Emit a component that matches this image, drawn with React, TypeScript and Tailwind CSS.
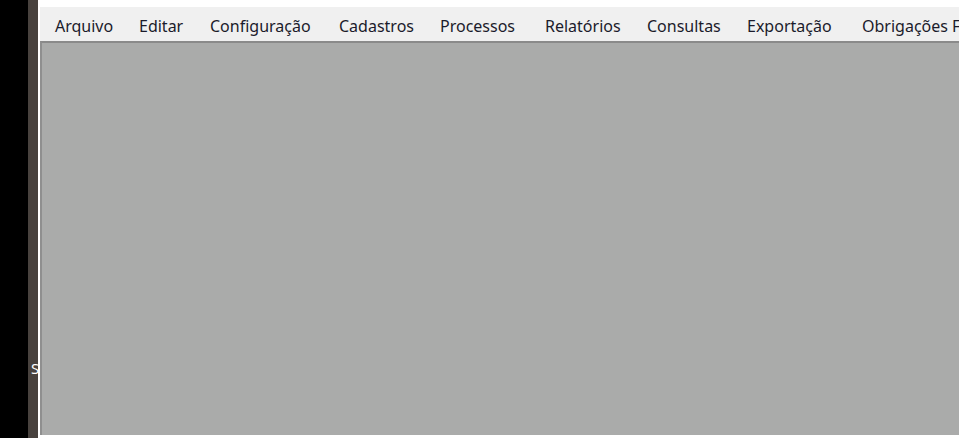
import React from "react";

const menus = [
  { label: "Arquivo", w: "w-[84px]" },
  { label: "Editar", w: "w-[71px]" },
  { label: "Configuração", w: "w-[129px]" },
  { label: "Cadastros", w: "w-[101px]" },
  { label: "Processos", w: "w-[105px]" },
  { label: "Relatórios", w: "w-[102px]" },
  { label: "Consultas", w: "w-[100px]" },
  { label: "Exportação", w: "w-[115px]" },
  { label: "Obrigações Fiscais", w: "w-[140px]" },
];

export default function App() {
  return (
    <div className="flex h-[438px] w-full overflow-hidden bg-black font-['Noto_Sans',sans-serif]">
      {/* desktop edge */}
      <div className="w-[28px] shrink-0 bg-black" />
      <div className="flex w-[10px] shrink-0 flex-col justify-end overflow-hidden bg-[#48423e] pb-[62px]">
        <span className="ml-[3px] text-[15px] leading-none text-white">S</span>
      </div>

      {/* app window */}
      <div className="flex min-w-0 flex-1 flex-col bg-white pl-[2px] pr-[3px]">
        <div className="h-[7px] shrink-0 bg-white" />
        <nav className="flex h-[34px] shrink-0 items-center overflow-hidden whitespace-nowrap bg-[#f0f0f0] pl-[15px] pt-[4px] text-[16px] text-[#1b1b2b]">
          {menus.map((m) => (
            <span key={m.label} className={`${m.w} shrink-0 leading-none`}>
              {m.label}
            </span>
          ))}
        </nav>
        <div className="flex min-h-0 flex-1 pb-[3px]">
          <div className="flex-1 border-t-2 border-l-2 border-t-[#8a8a8a] border-l-[#8f8f8f] bg-[#aaabaa]" />
        </div>
      </div>
    </div>
  );
}
